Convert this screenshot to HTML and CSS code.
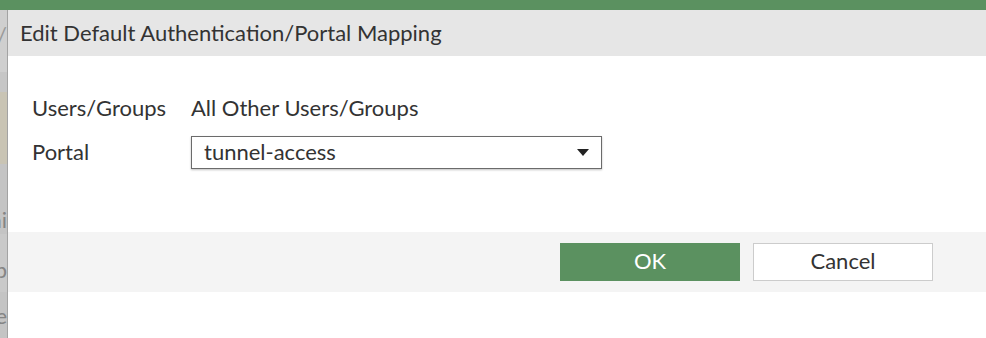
FILE: index.html
```html
<!DOCTYPE html>
<html lang="en">
  <head>
    <meta charset="UTF-8" />
    <meta name="viewport" content="width=device-width, initial-scale=1.0" />
    <title>Edit Default Authentication/Portal Mapping</title>
    <link rel="stylesheet" href="styles.css">
  </head>
  <body>
    <div class="top-bar"></div>
    <div class="screen">
      <!-- page behind the dialog, dimmed -->
      <div class="backdrop">
        <div class="bd-line bd-a">/</div>
        <div class="bd-line bd-b"></div>
        <div class="bd-line bd-c"></div>
        <div class="bd-line bd-d">ni</div>
        <div class="bd-line bd-e">b</div>
        <div class="bd-line bd-f">e</div>
      </div>
      <div class="dialog">
        <div class="dialog-header">Edit Default Authentication/Portal Mapping</div>
        <div class="dialog-body">
          <div class="field-label">Users/Groups</div>
          <div class="field-value">All Other Users/Groups</div>
          <div class="field-label">Portal</div>
          <div class="select">
            <span>tunnel-access</span>
            <span class="caret"></span>
          </div>
        </div>
        <div class="dialog-footer">
          <button class="btn btn-primary">OK</button>
          <button class="btn">Cancel</button>
        </div>
      </div>
    </div>
  </body>
</html>
```

FILE: styles.css
```css
html,
body {
  margin: 0;
  height: 100%;
}
body {
  font-family: Lato, "Open Sans", Arial, sans-serif;
  color: #333;
  background: #fff;
  display: flex;
  flex-direction: column;
  overflow: hidden;
}
.top-bar {
  height: 10px;
  background: #5b9160;
  flex: none;
}
.screen {
  flex: 1;
  display: flex;
}

/* dimmed page on the left */
.backdrop {
  width: 8px;
  flex: none;
  background: #c4c4c4;
  border-right: 1px solid #a3a3a3;
  box-sizing: border-box;
  display: flex;
  flex-direction: column;
}
.bd-line {
  direction: rtl;
  overflow: hidden;
  white-space: nowrap;
  color: #858585;
  font-size: 22px;
  line-height: 22px;
}
.bd-a {
  height: 62px;
  padding-top: 14px;
  box-sizing: border-box;
  background: #cfcfcf;
  color: #9a9a9a;
}
.bd-b {
  height: 20px;
  background: #c6c6c6;
}
.bd-c {
  height: 72px;
  background: #c9c4b4;
}
.bd-d {
  height: 70px;
  padding-top: 45px;
  box-sizing: border-box;
}
.bd-e {
  height: 58px;
  padding-top: 25px;
  box-sizing: border-box;
  background: #c9c9c9;
}
.bd-f {
  flex: 1;
  padding-top: 13px;
  box-sizing: border-box;
}

.dialog {
  flex: 1;
  display: flex;
  flex-direction: column;
}
.dialog-header {
  height: 46px;
  background: #e6e6e6;
  padding-left: 12px;
  font-size: 22px;
  line-height: 46px;
  color: #333;
}
.dialog-body {
  display: grid;
  grid-template-columns: 159px 411px;
  grid-auto-rows: 33px;
  row-gap: 11px;
  align-items: center;
  padding: 36px 0 63px 24px;
  font-size: 22px;
}
.field-label,
.field-value {
  padding-bottom: 2px;
}
.select {
  height: 33px;
  box-sizing: border-box;
  border: 1px solid #6b6b6b;
  box-shadow: 0 1px 2px rgba(0, 0, 0, 0.25);
  display: flex;
  align-items: center;
  justify-content: space-between;
  padding: 0 12px 2px 12px;
  background: #fff;
}
.caret {
  width: 0;
  height: 0;
  border-left: 6px solid transparent;
  border-right: 6px solid transparent;
  border-top: 7px solid #222;
  margin-top: 1px;
}
.dialog-footer {
  height: 60px;
  background: #f4f4f4;
  display: flex;
  justify-content: flex-end;
  align-items: center;
  gap: 13px;
  padding-right: 53px;
}
.btn {
  width: 180px;
  height: 38px;
  box-sizing: border-box;
  border: 1px solid #cccccc;
  background: #fff;
  color: #333;
  font-family: Lato, "Open Sans", Arial, sans-serif;
  font-size: 22px;
  padding: 0 0 3px;
}
.btn-primary {
  background: #5b9160;
  border-color: #5b9160;
  color: #fff;
}
```
